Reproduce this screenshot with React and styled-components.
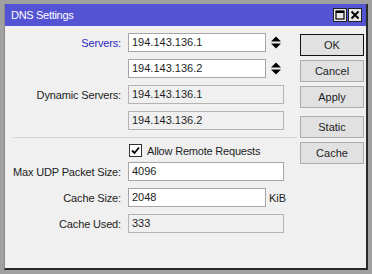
import React from "react";
import styled, { createGlobalStyle } from "styled-components";

const GlobalStyle = createGlobalStyle`
  html, body {
    margin: 0;
    padding: 0;
    background: #a0a0a0;
  }
  body {
    font-family: "Liberation Sans", Arial, sans-serif;
    font-size: 11px;
    color: #1e1e1e;
  }
`;

const servers = ["194.143.136.1", "194.143.136.2"];
const dynamicServers = ["194.143.136.1", "194.143.136.2"];

const Spinner = () => (
  <SpinIcon width="10" height="13" viewBox="0 0 10 13">
    <path d="M0 5.5 L5 0.5 L10 5.5 Z" fill="#000" />
    <path d="M0 7.5 L10 7.5 L5 12.5 Z" fill="#000" />
  </SpinIcon>
);

const App = () => {
  return (
    <>
      <GlobalStyle />
      <Frame>
        <Window>
          <TitleBar>
            <Title>DNS Settings</Title>
            <TitleButtons>
              <TitleButton>
                <svg width="10" height="10" viewBox="0 0 10 10">
                  <rect x="1" y="1" width="8" height="8" fill="none" stroke="#000" strokeWidth="1.2" />
                  <rect x="1" y="1" width="8" height="2" fill="#000" />
                </svg>
              </TitleButton>
              <TitleButton>
                <svg width="10" height="10" viewBox="0 0 10 10">
                  <path d="M1.5 1.5 L8.5 8.5 M8.5 1.5 L1.5 8.5" stroke="#000" strokeWidth="1.9" />
                </svg>
              </TitleButton>
            </TitleButtons>
          </TitleBar>
          <Body>
            <FormPane>
              {servers.map((s, i) => (
                <Row key={"s" + i}>
                  <Label $accent>{i === 0 ? "Servers:" : ""}</Label>
                  <Field $w={138}>{s}</Field>
                  <Spinner />
                </Row>
              ))}
              {dynamicServers.map((s, i) => (
                <Row key={"d" + i}>
                  <Label>{i === 0 ? "Dynamic Servers:" : ""}</Label>
                  <Field $w={156} $disabled>
                    {s}
                  </Field>
                </Row>
              ))}
              <Separator />
              <CheckRow>
                <Label />
                <Box>
                  <svg width="9" height="9" viewBox="0 0 9 9">
                    <path d="M1 4.5 L3.5 7 L8 1.5" fill="none" stroke="#000" strokeWidth="1.8" />
                  </svg>
                </Box>
                <CheckText>Allow Remote Requests</CheckText>
              </CheckRow>
              <Row>
                <Label>Max UDP Packet Size:</Label>
                <Field $w={156}>4096</Field>
              </Row>
              <Row>
                <Label>Cache Size:</Label>
                <Field $w={138}>2048</Field>
                <Unit>KiB</Unit>
              </Row>
              <Row>
                <Label>Cache Used:</Label>
                <Field $w={156} $disabled>
                  333
                </Field>
              </Row>
            </FormPane>
            <ButtonCol>
              <Btn $default>OK</Btn>
              <Btn>Cancel</Btn>
              <Btn>Apply</Btn>
              <Btn $gap>Static</Btn>
              <Btn>Cache</Btn>
            </ButtonCol>
          </Body>
        </Window>
      </Frame>
    </>
  );
};

export default App;

const Frame = styled.div`
  width: 372px;
  height: 274px;
  box-sizing: border-box;
  padding: 4px;
  background: #a0a0a0;
`;

const Window = styled.div`
  height: 100%;
  box-sizing: border-box;
  display: flex;
  flex-direction: column;
  background: #f0f0f0;
  border-left: 1px solid #8a8a8a;
  border-right: 2px solid #2a2a2a;
  border-bottom: 2px solid #2a2a2a;
`;

const TitleBar = styled.div`
  height: 22px;
  flex: none;
  display: flex;
  align-items: center;
  justify-content: space-between;
  background: #5353d4;
  padding: 0 4px 0 6px;
`;

const Title = styled.span`
  color: #fff;
  font-size: 11px;
  letter-spacing: -0.3px;
`;

const TitleButtons = styled.div`
  display: flex;
  gap: 1px;
`;

const TitleButton = styled.div`
  width: 14px;
  height: 14px;
  box-sizing: border-box;
  border: 1px solid #222;
  background: #e8e8e8;
  display: flex;
  align-items: center;
  justify-content: center;
`;

const Body = styled.div`
  flex: 1;
  display: flex;
  padding-top: 7px;
`;

const FormPane = styled.div`
  width: 287px;
  display: flex;
  flex-direction: column;
`;

const Row = styled.div`
  display: flex;
  align-items: center;
  height: 19px;
  margin-bottom: 7px;
`;

const CheckRow = styled(Row)`
  margin-bottom: 2px;
`;

const Label = styled.div`
  width: 116px;
  flex: none;
  margin-right: 7px;
  text-align: right;
  white-space: nowrap;
  letter-spacing: -0.15px;
  color: ${(p) => (p.$accent ? "#2b2bc4" : "#222")};
`;

const Field = styled.div`
  width: ${(p) => p.$w}px;
  height: 19px;
  box-sizing: border-box;
  padding-left: 3px;
  line-height: 17px;
  border: 1px solid ${(p) => (p.$disabled ? "#b4b4b4" : "#a6a6a6")};
  background: ${(p) => (p.$disabled ? "#f0f0f0" : "#fff")};
`;

const SpinIcon = styled.svg`
  margin-left: 5px;
`;

const Unit = styled.span`
  margin-left: 3px;
`;

const Separator = styled.div`
  height: 1px;
  margin: 0 -5px 3px 8px;
  background: #d6d6d6;
`;

const Box = styled.div`
  width: 13px;
  height: 13px;
  box-sizing: border-box;
  margin-left: 1px;
  border: 1px solid #333;
  background: #fff;
  display: flex;
  align-items: center;
  justify-content: center;
`;

const CheckText = styled.span`
  margin-left: 5px;
  letter-spacing: -0.2px;
`;

const ButtonCol = styled.div`
  display: flex;
  flex-direction: column;
  gap: 4px;
  margin-left: 8px;
  padding-top: 1px;
`;

const Btn = styled.div`
  width: 64px;
  height: 22px;
  box-sizing: border-box;
  display: flex;
  align-items: center;
  justify-content: center;
  border: 1px solid ${(p) => (p.$default ? "#111" : "#adadad")};
  background: #e1e1e1;
  margin-top: ${(p) => (p.$gap ? "4px" : "0")};
`;
